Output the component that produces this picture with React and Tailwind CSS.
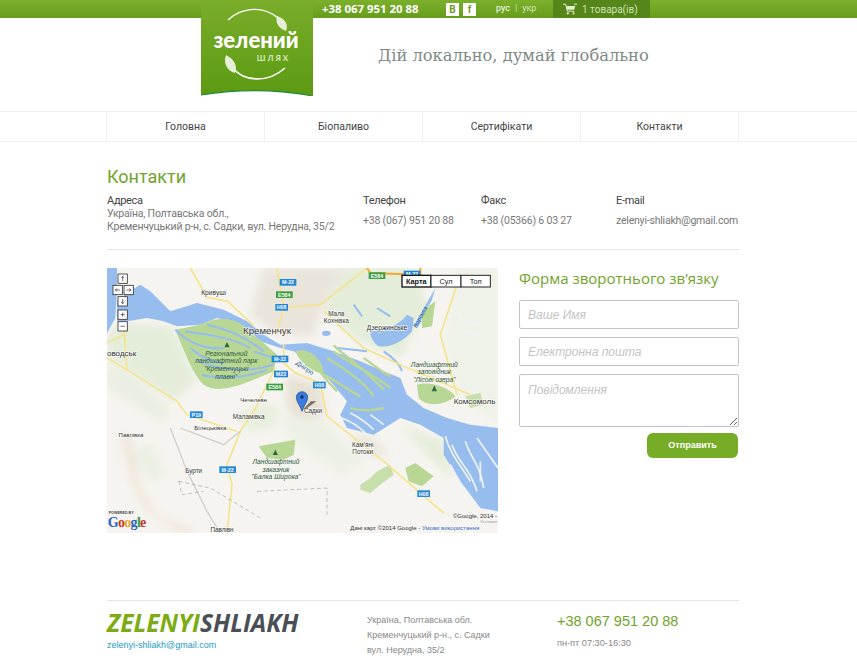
const navItems = ['Головна', 'Біопаливо', 'Сертифікати', 'Контакти'];

const WATER = '#97bcee';
const PARK = '#b8d795';

const placeLabels = [
  { x: 320, y: 80, t: 'Кривуші', s: 20 },
  { x: 480, y: 199, t: 'Кременчук', s: 29 },
  { x: 0, y: 264, t: 'оводськ', s: 24, a: 'start' },
  { x: 688, y: 143, t: 'Мала', s: 19 },
  { x: 688, y: 165, t: 'Кохнівка', s: 19 },
  { x: 840, y: 187, t: 'Дзержинське', s: 20 },
  { x: 440, y: 401, t: 'Чечелеве', s: 18 },
  { x: 425, y: 453, t: 'Маламівка', s: 19 },
  { x: 310, y: 487, t: 'Білецьківка', s: 18 },
  { x: 72, y: 507, t: 'Павлівка', s: 18 },
  { x: 260, y: 616, t: 'Бурти', s: 19 },
  { x: 345, y: 791, t: 'Павлівн', s: 19 },
  { x: 618, y: 434, t: 'Садки', s: 19 },
  { x: 767, y: 537, t: 'Кам’яні', s: 19 },
  { x: 767, y: 559, t: 'Потоки', s: 19 },
  { x: 1040, y: 407, t: 'Комсомоль', s: 24, a: 'start' },
];

const parkLabels = [
  { x: 358, y: 263, t: 'Регіональний' },
  { x: 358, y: 286, t: 'ландшафтний парк' },
  { x: 358, y: 309, t: '"Кременчуцькі' },
  { x: 358, y: 332, t: 'плавні"' },
  { x: 982, y: 296, t: 'Ландшафтний' },
  { x: 982, y: 319, t: 'заповідник' },
  { x: 982, y: 341, t: '"Лісові озера"' },
  { x: 507, y: 588, t: 'Ландшафтний' },
  { x: 507, y: 611, t: 'заказник' },
  { x: 507, y: 634, t: '"Балка Широка"' },
];

const roadBadges = [
  { x: 543, y: 43, t: 'M-22', c: '#1f86d8', w: 50 },
  { x: 532, y: 80, t: 'E584', c: '#3b9d3f', w: 50 },
  { x: 524, y: 118, t: 'H08', c: '#1f86d8', w: 38 },
  { x: 519, y: 273, t: 'M-22', c: '#1f86d8', w: 50 },
  { x: 522, y: 318, t: 'M22', c: '#1f86d8', w: 42 },
  { x: 503, y: 357, t: 'E584', c: '#3b9d3f', w: 50 },
  { x: 637, y: 351, t: 'H08', c: '#1f86d8', w: 38 },
  { x: 268, y: 440, t: 'P19', c: '#1f86d8', w: 38 },
  { x: 362, y: 605, t: 'M-22', c: '#1f86d8', w: 50 },
  { x: 950, y: 677, t: 'H08', c: '#1f86d8', w: 38 },
  { x: 810, y: 23, t: 'E584', c: '#3b9d3f', w: 50 },
  { x: 915, y: 18, t: 'M-22', c: '#1f86d8', w: 50 },
];

const mapButtons = [
  { x: 47, y: 32, d: 'M47 42V22M40 29l7-7 7 7' },
  { x: 32, y: 66, d: 'M42 66H22M29 59l-7 7 7 7' },
  { x: 65, y: 66, d: 'M55 66H75M68 59l7 7-7 7' },
  { x: 47, y: 100, d: 'M47 90V110M40 103l7 7 7-7' },
  { x: 47, y: 140, d: 'M38 140H56M47 131V149' },
  { x: 47, y: 175, d: 'M38 175H56' },
];

const roads = [
  'M530 230L530 285L565 315L640 345L660 445L830 580L1010 735',
  'M505 300L440 430L400 490L360 590L375 650L360 795',
  'M0 270L60 305L210 400L240 440L390 490',
  'M250 0L300 88L362 100L440 172',
  'M510 195L530 120L640 110L780 0',
  'M650 130L770 240L880 290L1020 350L1090 380',
  'M1050 50L1000 200L1050 380',
  'M50 175L60 305',
  'M0 225L50 200',
  'M510 0L530 120',
];

const waterStripes = [
  'M205 185C240 225 300 245 350 240',
  'M235 190C290 200 370 205 430 240',
  'M300 170C350 180 410 200 470 250',
  'M265 275C320 300 410 320 500 290',
  'M285 320C340 335 420 330 480 305',
  'M250 240C270 260 320 285 350 285',
  'M440 250L500 270',
  'M740 110L765 145',
  'M810 120L850 145',
];

const islandStripes = [
  'M680 232C720 270 760 290 830 365',
  'M660 270C710 300 770 340 800 385',
  'M680 250C730 290 790 310 850 360',
  'M650 320C690 340 730 370 760 385',
  'M770 270C800 290 820 310 850 325',
  'M620 280C640 320 670 350 690 370',
  'M730 420C760 430 790 430 830 420',
];

const whiteStripes = [
  'M705 450C730 460 750 470 775 495',
  'M730 435C760 450 780 465 800 485',
  'M790 440L830 470',
  'M1015 505C1030 560 1060 590 1090 640',
  'M1035 530C1050 580 1090 600 1110 670',
  'M1075 520C1090 570 1120 590 1130 660',
  'M1110 510L1173 600',
  'M1030 590L1090 700',
  'M1120 580L1120 640',
  'M1050 130C1060 160 1090 170 1120 165',
  'M1060 190L1120 200',
];

// карта намальована по кропу x3, тому viewBox теж x3
function MapDrawing() {
  return (
    <svg viewBox="0 0 1173 795" className="block w-[391px] h-[265px]" style={{ fontFamily: '"Liberation Sans", sans-serif' }}>
      <defs>
        <filter id="softLand" x="-5%" y="-5%" width="110%" height="110%">
          <feGaussianBlur stdDeviation="12" />
        </filter>
        <filter id="softEdge" x="-2%" y="-2%" width="104%" height="104%">
          <feGaussianBlur stdDeviation="1.5" />
        </filter>
      </defs>
      <rect width="1173" height="795" fill="#f6f4f0" />
      {/* relief */}
      <g filter="url(#softLand)">
        <path d="M470 0H720L640 130L620 205L510 200L430 140Z" fill="#e9e5db" />
        <path d="M720 0H930L960 120L880 270L760 220L650 130Z" fill="#e3edd9" />
        <path d="M1060 0H1173V470L1060 380L1010 220Z" fill="#eff2e8" />
        <path d="M0 190L60 165L200 180L270 340L200 400L60 300L0 270Z" fill="#e4edda" />
        <path d="M0 290L60 310L190 420L170 470L60 400L0 360Z" fill="#ebeee2" />
        <path d="M540 320L640 350L655 440L580 470L540 420Z" fill="#e7e1d4" />
        <path d="M520 440L660 460L780 590L700 620L540 510Z" fill="#edf1e5" />
        <path d="M720 510L790 500L850 560L800 570Z" fill="#ebe7dc" />
        <path d="M880 470L1010 520L1040 640L960 560Z" fill="#e4edda" />
        <path d="M390 440L460 400L520 420L500 480L420 490Z" fill="#e7efdc" />
        <path d="M60 560L130 520L180 620L130 640Z" fill="#ebf0e3" />
        <path d="M40 500L70 495L95 650L150 740L280 795H220L110 720L70 630Z" fill="#efe5d6" />
      </g>
      <g filter="url(#softEdge)">
        {/* green */}
        <path d="M455 535L510 525L565 515L560 560L530 575L480 570Z" fill={PARK} />
        <path d="M895 600L925 585L980 625L945 655L905 640Z" fill={PARK} />
        <path d="M760 650L790 630L810 610L850 590L860 620L820 650L790 675L760 665Z" fill="#c6dfab" />
        <path d="M930 350C960 340 1020 350 1045 385C1020 410 960 420 935 390Z" fill={PARK} />
        <path d="M945 130L985 100L975 175L945 180Z" fill={PARK} />
        <path d="M1075 385L1120 375L1130 410L1090 420Z" fill="#c6dfab" />
        {/* water */}
        <path d="M0 0H30V60L25 150L0 195Z" fill={WATER} />
        <path d="M30 100L60 75L100 50L130 70L190 130L270 105L350 125L420 160L470 200L520 230L600 225L680 250L760 280L830 310L880 330L900 380L950 420L1020 450L1090 470L1173 480V730L1120 720L1060 640L1010 560L1010 510L940 470L880 450L800 500L720 480L700 440L720 400L670 340L620 290L560 250L520 240L460 220L420 180L370 160L330 150L280 170L210 175L170 160L120 150L60 160L30 160Z" fill={WATER} />
        <path d="M790 190C830 190 880 170 900 140L920 150L915 190C890 220 850 240 815 235C800 225 790 210 790 190Z" fill={WATER} />
        <path d="M920 175L945 130L985 60L975 95L945 145L935 175Z" fill={WATER} />
        <ellipse cx="658" cy="196" rx="13" ry="8" fill={WATER} />
        <path d="M830 250C860 270 880 290 885 310M690 240L780 250" stroke={WATER} strokeWidth="6" fill="none" />
        {/* floodplain */}
        <path d="M205 185L280 170C340 140 400 150 430 195L470 225L510 260L500 310C430 340 340 385 290 350C260 320 240 270 205 185Z" fill={PARK} />
        <path d="M565 250C600 235 650 270 650 320C620 310 580 290 565 250Z" fill={PARK} />
        {waterStripes.map((d) => (
          <path key={d} d={d} stroke={WATER} strokeWidth="6" fill="none" />
        ))}
        {islandStripes.map((d) => (
          <path key={d} d={d} stroke={PARK} strokeWidth="7" fill="none" />
        ))}
        {whiteStripes.map((d) => (
          <path key={d} d={d} stroke="#eef3f4" strokeWidth="5" fill="none" />
        ))}
        {/* roads */}
        <g fill="none" stroke="#f5e48e" strokeWidth="5">
          {roads.map((d) => (
            <path key={d} d={d} />
          ))}
        </g>
        <path d="M190 480L240 610L300 730L340 795M220 480L350 530L400 490" stroke="#cfcfc8" strokeWidth="4" fill="none" />
        <path d="M215 640L310 660L460 750M215 640L225 680L290 670M450 670L660 660L660 740" stroke="#a5a5a1" strokeWidth="2" strokeDasharray="12 8" fill="none" />
        <path d="M780 0L790 15L940 20V0" stroke="#f2a62e" strokeWidth="6" fill="none" />
      </g>
      <path d="M360 222l-8 16h16zM982 352l-8 18h16zM505 545l-8 16h16z" fill="#2c6b47" />

      {roadBadges.map((b) => (
        <g key={`${b.x}-${b.y}`}>
          <rect x={b.x - b.w / 2} y={b.y - 10} width={b.w} height="20" fill={b.c} />
          <text x={b.x} y={b.y + 6} fontSize="16" fontWeight="700" fill="#fff" textAnchor="middle">{b.t}</text>
        </g>
      ))}
      {placeLabels.map((l) => (
        <text key={l.t} x={l.x} y={l.y} fontSize={l.s} fill="#333" textAnchor={l.a || 'middle'} stroke="#fff" strokeWidth="4" paintOrder="stroke" strokeOpacity="0.7">{l.t}</text>
      ))}
      {parkLabels.map((l) => (
        <text key={l.t} x={l.x} y={l.y} fontSize="20" fontStyle="italic" fill="#2a5a3a" textAnchor="middle">{l.t}</text>
      ))}
      <text x="590" y="305" fontSize="19" fontStyle="italic" fill="#2c5f9e" textAnchor="middle" transform="rotate(35 590 305)">Дніпро</text>
      <text x="945" y="150" fontSize="18" fontStyle="italic" fill="#2c5f9e" textAnchor="middle" transform="rotate(-62 945 150)">Ворскла</text>

      {/* pin */}
      <path d="M587 425L612 400H628L600 420Z" fill="#55534d" opacity="0.8" />
      <path d="M585 430C580 412 568 402 568 388A17 17 0 0 1 602 388C602 402 590 412 585 430Z" fill="#3a7be0" stroke="#16407f" strokeWidth="2" />
      <circle cx="585" cy="387" r="5" fill="#0c2a5c" />

      {/* controls */}
      {mapButtons.map((b) => (
        <g key={b.d}>
          <rect x={b.x - 14} y={b.y - 14} width="28" height="28" fill="#fff" stroke="#333" strokeWidth="2.5" />
          <path d={b.d} transform={`translate(${b.x} ${b.y}) scale(0.7) translate(${-b.x} ${-b.y})`} stroke="#333" strokeWidth="3" fill="none" />
        </g>
      ))}
      <rect x="885" y="22" width="87" height="35" fill="#fff" stroke="#111" strokeWidth="4" />
      <rect x="972" y="22" width="90" height="35" fill="#fff" stroke="#222" strokeWidth="3" />
      <rect x="1062" y="22" width="88" height="35" fill="#fff" stroke="#222" strokeWidth="3" />
      <text x="928" y="48" fontSize="22" fontWeight="700" fill="#111" textAnchor="middle">Карта</text>
      <text x="1017" y="48" fontSize="22" fill="#222" textAnchor="middle">Сул</text>
      <text x="1106" y="48" fontSize="22" fill="#222" textAnchor="middle">Топ</text>

      {/* google */}
      <text x="5" y="739" fontSize="11" fontWeight="700" fill="#444">POWERED BY</text>
      <text x="2" y="778" fontSize="42" fontWeight="700" style={{ fontFamily: '"Liberation Serif", serif' }} textLength="116">
        <tspan fill="#2a62c8">G</tspan><tspan fill="#d0342c">o</tspan><tspan fill="#e8a91c">o</tspan><tspan fill="#2a62c8">g</tspan><tspan fill="#3a9a3c">l</tspan><tspan fill="#d0342c">e</tspan>
      </text>
      <text x="1170" y="749" fontSize="18" fill="#333" textAnchor="end">©Google, 2014 -</text>
      <text x="1170" y="766" fontSize="13" fill="#999" textAnchor="end">Условия</text>
      <text x="730" y="786" fontSize="18" fill="#333">Дані карт ©2014 Google - <tspan fill="#3a6fc4">Умови використання</tspan></text>
    </svg>
  );
}

function LogoBadge() {
  return (
    <div className="absolute left-[201px] top-0 w-[112px] h-[96px]">
      <svg viewBox="0 0 112 96" className="block w-full h-full">
        <defs>
          <linearGradient id="logoFill" x1="0" y1="0" x2="0" y2="1">
            <stop offset="0" stopColor="#79ad29" />
            <stop offset="1" stopColor="#5c9a12" />
          </linearGradient>
        </defs>
        <path d="M0 0H112V96C75 89 37 89 0 95Z" fill="url(#logoFill)" />
        <path d="M0 95C37 89 75 89 112 96" stroke="#1f8a3a" strokeWidth="1.2" fill="none" />
        <path d="M27 20C38 9 60 4 77 18" stroke="#fff" strokeWidth="1.3" fill="none" />
        <path d="M85 31C77 28 74 22 76 16C83 18 88 24 85 31Z" fill="#e6efd6" />
        <path d="M32 68C42 81 66 84 84 68" stroke="#fff" strokeWidth="1.6" fill="none" />
        <path d="M25 55C33 59 37 66 34 73C26 71 22 63 25 55Z" fill="#e6efd6" />
        <text x="55" y="48" fontSize="22" fontWeight="900" fill="#fff" textAnchor="middle" style={{ fontFamily: 'Lato, sans-serif' }}>зелений</text>
        <text x="72.5" y="61" fontSize="8" fontWeight="700" letterSpacing="2" fill="#dcebc4" textAnchor="middle" style={{ fontFamily: 'Lato, sans-serif' }}>ШЛЯХ</text>
      </svg>
    </div>
  );
}

function CartIcon() {
  return (
    <svg viewBox="0 0 16 13" className="w-[14px] h-[12px]">
      <path d="M0 1H3L5 9H13M12.5 1H16" stroke="#e4efcf" strokeWidth="1.1" fill="none" />
      <path d="M3.5 3H14L12.8 7.4H4.6Z" fill="#e4efcf" />
      <circle cx="5.5" cy="11.5" r="1.2" fill="#e4efcf" />
      <circle cx="12" cy="11.5" r="1.2" fill="#e4efcf" />
    </svg>
  );
}

function ContactCol({ title, className, children }) {
  return (
    <div className={className}>
      <div className="text-[11px] leading-[12px] tracking-[-0.3px] text-[#444]">{title}</div>
      {children}
    </div>
  );
}

export default function App() {
  return (
    <div className="relative w-[857px] h-[670px] overflow-hidden bg-white font-['Roboto',sans-serif]">
      {/* top bar */}
      <div className="h-[18px] bg-gradient-to-b from-[#7bb02b] to-[#659d1c] flex items-center pl-[322px]">
        <span className="w-[124px] text-[11.4px] font-bold text-white font-['Open_Sans',sans-serif] whitespace-nowrap">+38 067 951 20 88</span>
        <div className="w-[50px] flex gap-[4px]">
          <span className="w-[13px] h-[13px] bg-white text-[#6a9f20] text-[10px] font-bold leading-[13px] text-center">В</span>
          <span className="w-[13px] h-[13px] bg-white text-[#6a9f20] text-[10px] font-bold leading-[13px] text-center">f</span>
        </div>
        <div className="w-[57px] text-[9px] text-[#d6e6b8] whitespace-nowrap">
          <span className="text-white">рус</span><span className="mx-[5px]">|</span>укр
        </div>
        <div className="w-[97px] h-[18px] bg-[#55861a] flex items-center pl-[10px] gap-[5px]">
          <CartIcon />
          <span className="text-[10px] text-[#cfe0ad] whitespace-nowrap">1 товара(ів)</span>
        </div>
      </div>

      <LogoBadge />

      {/* header */}
      <div className="h-[93px] flex items-start pl-[378px] pt-[26px]">
        <div className="text-[16.3px] leading-[24px] text-[#7e8a85] font-['DejaVu_Serif',serif] whitespace-nowrap">Дій локально, думай глобально</div>
      </div>

      {/* nav */}
      <div className="h-[31px] border-y border-[#efefef]">
        <div className="ml-[106px] w-[633px] h-full grid grid-cols-4 border-r border-[#efefef]">
          {navItems.map((item) => (
            <div key={item} className="border-l border-[#efefef] flex items-center justify-center text-[10.5px] text-[#444]">{item}</div>
          ))}
        </div>
      </div>

      <div className="ml-[107px] w-[632px]">
        <h1 className="mt-[23px] text-[18px] leading-[24px] text-[#6fa52a]">Контакти</h1>

        <div className="mt-[6px] h-[47px] flex text-[#777] text-[10.5px] tracking-[-0.2px] whitespace-nowrap">
          <ContactCol title="Адреса" className="w-[256px]">
            <div className="leading-[13px]">Україна, Полтавська обл.,</div>
            <div className="leading-[13px]">Кременчуцький р-н, с. Садки, вул. Нерудна, 35/2</div>
          </ContactCol>
          <ContactCol title="Телефон" className="w-[118px]">
            <div className="mt-[6px] leading-[15px]">+38 (067) 951 20 88</div>
          </ContactCol>
          <ContactCol title="Факс" className="w-[135px]">
            <div className="mt-[6px] leading-[15px]">+38 (05366) 6 03 27</div>
          </ContactCol>
          <ContactCol title="E-mail" className="w-[123px]">
            <div className="mt-[6px] leading-[15px]">zelenyi-shliakh@gmail.com</div>
          </ContactCol>
        </div>

        <div className="mt-[7px] h-px bg-[#e6e6e6]" />

        <div className="mt-[18px] flex gap-[21px]">
          <MapDrawing />
          <div className="w-[220px]">
            <h2 className="text-[15px] leading-[20px] text-[#6fa52a] font-['Open_Sans',sans-serif] whitespace-nowrap">Форма зворотнього зв’язку</h2>
            <form className="mt-[12px] flex flex-col gap-[8px] font-['Liberation_Sans',sans-serif]">
              <input placeholder="Ваше Имя" className="h-[29px] border border-[#c4c4c4] rounded-[2px] px-[8px] text-[12px] italic placeholder:text-[#c4c4c4]" />
              <input placeholder="Електронна пошта" className="h-[29px] border border-[#c4c4c4] rounded-[2px] px-[8px] text-[12px] italic placeholder:text-[#c4c4c4]" />
              <textarea placeholder="Повідомлення" className="h-[53px] border border-[#c4c4c4] rounded-[2px] px-[8px] py-[6px] text-[12px] italic placeholder:text-[#c4c4c4]" />
              <div className="-mt-[2px] flex justify-end pr-[1px]">
                <button type="button" className="w-[91px] h-[25px] rounded-[6px] bg-[#76ac26] text-white text-[9px] font-bold">Отправить</button>
              </div>
            </form>
          </div>
        </div>

        <div className="mt-[67px] h-px bg-[#e6e6e6]" />

        <div className="mt-[9px] flex">
          <div className="w-[260px]">
            <div className="text-[24.6px] leading-[26px] font-bold italic font-['Open_Sans',sans-serif] whitespace-nowrap">
              <span className="text-[#7cab14]">ZELENYI</span><span className="text-[#4a4f55]">SHLIAKH</span>
            </div>
            <a className="block mt-[2px] text-[9px] leading-[14px] text-[#1a9cc4] font-['Liberation_Sans',sans-serif]">zelenyi-shliakh@gmail.com</a>
          </div>
          <div className="w-[190px] pt-[3px] text-[9px] leading-[15px] text-[#888] font-['Liberation_Sans',sans-serif]">
            <div>Україна, Полтавська обл.</div>
            <div>Кременчуцький р-н., с. Садки</div>
            <div>вул. Нерудна, 35/2</div>
          </div>
          <div className="pt-[1px] font-['Liberation_Sans',sans-serif]">
            <div className="text-[14.5px] leading-[20px] text-[#6fa52a] whitespace-nowrap">+38 067 951 20 88</div>
            <div className="mt-[5px] text-[9.2px] leading-[14px] text-[#888]">пн-пт 07:30-16:30</div>
          </div>
        </div>
      </div>
    </div>
  );
}
